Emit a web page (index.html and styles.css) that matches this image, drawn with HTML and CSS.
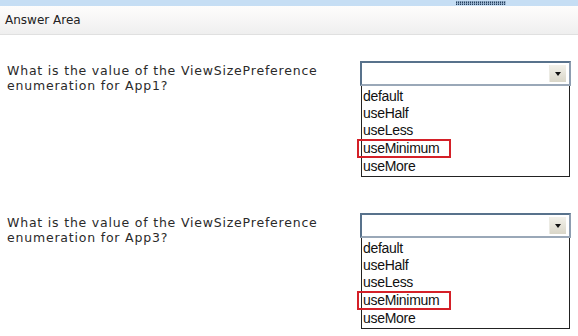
FILE: index.html
```html
<!DOCTYPE html>
<html lang="en">
<head>
    <meta charset="UTF-8">
    <meta name="viewport" content="width=device-width, initial-scale=1.0">
    <title>Answer Area</title>
    <link rel="stylesheet" href="styles.css">
</head>
<body>

    <div class="top-bar">
        <span class="grip"></span>
    </div>

    <div class="area-header">Answer Area</div>

    <!-- Vraag 1 -->
    <div class="question">
        <p class="question-text">What is the value of the ViewSizePreference<br>enumeration for App1?</p>
        <div class="answer">
            <div class="select-box">
                <span class="select-arrow"></span>
            </div>
            <ul class="option-list">
                <li>default</li>
                <li>useHalf</li>
                <li>useLess</li>
                <li class="picked">useMinimum</li>
                <li>useMore</li>
            </ul>
        </div>
    </div>

    <!-- Vraag 2 -->
    <div class="question second">
        <p class="question-text">What is the value of the ViewSizePreference<br>enumeration for App3?</p>
        <div class="answer">
            <div class="select-box">
                <span class="select-arrow"></span>
            </div>
            <ul class="option-list">
                <li>default</li>
                <li>useHalf</li>
                <li>useLess</li>
                <li class="picked">useMinimum</li>
                <li>useMore</li>
            </ul>
        </div>
    </div>

</body>
</html>
```

FILE: styles.css
```css
body {
    margin: 0;
    padding: 0;
    width: 578px;
    height: 336px;
    overflow: hidden;
    background-color: white;
    font-family: 'DejaVu Sans', Verdana, sans-serif;
}
.top-bar {
    height: 6px;
    background-color: #c6def4;
    position: relative;
}
.grip {
    position: absolute;
    left: 456px;
    top: 1px;
    width: 50px;
    height: 4px;
    background-image:
        repeating-linear-gradient(90deg, transparent 0 1px, #9fb9d3 1px 2px),
        repeating-linear-gradient(0deg, #26415f 0 1px, #6783a2 1px 2px);
}
.area-header {
    height: 28px;
    line-height: 28px;
    padding-left: 5px;
    font-size: 12px;
    color: #222;
    background: linear-gradient(#fefdfc, #efefef);
    border-bottom: 1px solid #e0e0e0;
}
.question {
    display: flex;
    padding-top: 26px;
}
.question.second {
    padding-top: 36px;
}
.question-text {
    margin: 2px 0 0 0;
    padding-left: 7px;
    width: 353px;
    font-size: 12.5px;
    letter-spacing: 0.8px;
    line-height: 15px;
    color: #2a2a2a;
}
.answer {
    width: 211px;
}
.select-box {
    height: 21px;
    border: 2px solid #58728c;
    border-right-color: #8d9db0;
    border-bottom-color: #9aa8b8;
    background-color: white;
    position: relative;
}
.select-arrow {
    position: absolute;
    right: 3px;
    top: 2px;
    width: 16px;
    height: 17px;
    background: linear-gradient(#f3f1ea, #d9d6c8);
    border-left: 1px solid #ecebe4;
}
.select-arrow::after {
    content: '';
    position: absolute;
    left: 5px;
    top: 7px;
    border-left: 3.5px solid transparent;
    border-right: 3.5px solid transparent;
    border-top: 4px solid #111;
}
.option-list {
    list-style: none;
    margin: 0 0 0 1px;
    padding: 2px 0 1px 0;
    width: 207px;
    border: 1px solid #222;
    border-top: none;
    font-family: 'Liberation Sans', Arial, sans-serif;
    font-size: 14px;
    letter-spacing: -0.3px;
    color: #111;
}
.option-list li {
    height: 17px;
    line-height: 17px;
    padding-left: 1px;
}
.option-list li.picked {
    width: 86px;
    margin-left: -5px;
    padding-left: 4px;
    height: 15px;
    line-height: 15px;
    border: 2px solid #d42028;
}
```
